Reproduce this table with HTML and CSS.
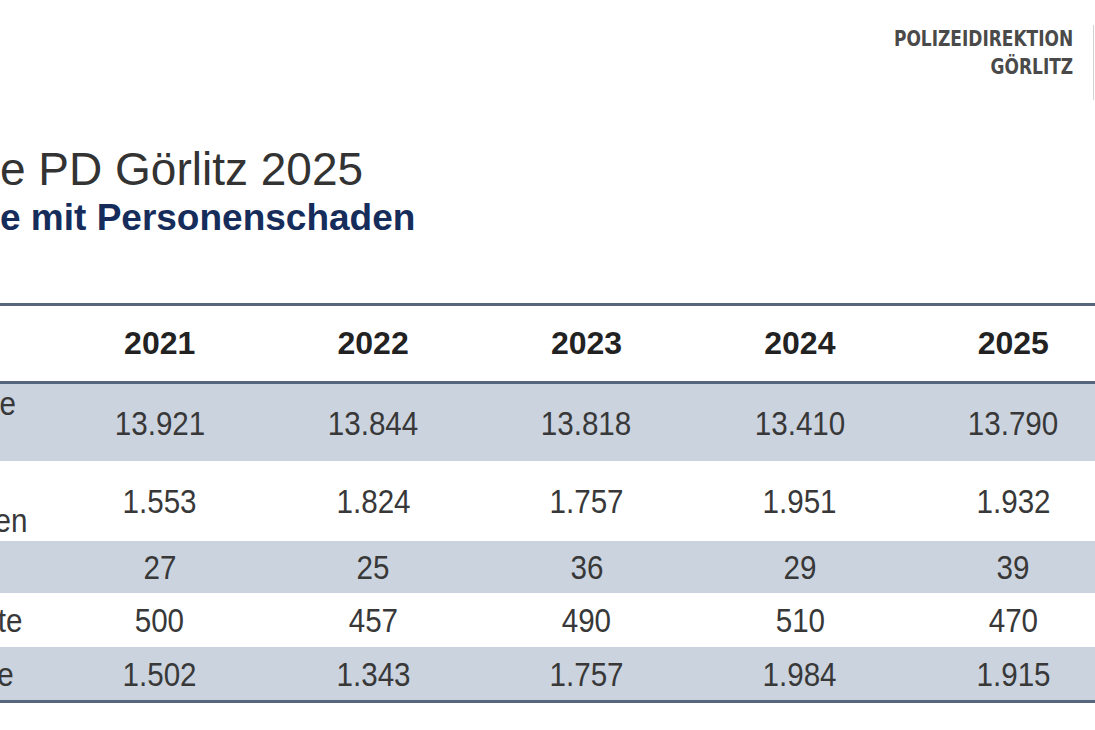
FILE: index.html
```html
<!DOCTYPE html>
<html lang="de">
<head>
<meta charset="utf-8">
<title>Verkehrsunfalllage PD Görlitz 2025</title>
<link rel="stylesheet" href="styles.css">
</head>
<body>
<div class="slide">
  <header class="brand">
    <div class="brand-text">
      <div>POLIZEIDIREKTION</div>
      <div>GÖRLITZ</div>
    </div>
    <div class="brand-rule"></div>
  </header>

  <section class="heading">
    <h1 class="title"><span class="pre">Verkehrsunfalllag</span><span>e PD Görlitz 2025</span></h1>
    <h2 class="subtitle"><span class="pre">Verkehrsunfäll</span><span>e mit Personenschaden</span></h2>
  </section>

  <table class="stats">
    <colgroup>
      <col class="c-label">
      <col class="c-year"><col class="c-year"><col class="c-year"><col class="c-year"><col class="c-year">
    </colgroup>
    <thead>
      <tr>
        <th class="label"></th>
        <th>2021</th><th>2022</th><th>2023</th><th>2024</th><th>2025</th>
      </tr>
    </thead>
    <tbody>
      <tr class="shade r1">
        <td class="label top"><span class="n">Verkehrsunfälle</span><br><span class="n">gesamt</span></td>
        <td><span class="n">13.921</span></td><td><span class="n">13.844</span></td><td><span class="n">13.818</span></td><td><span class="n">13.410</span></td><td><span class="n">13.790</span></td>
      </tr>
      <tr class="r2">
        <td class="label"><span class="n">Unfälle mit</span><br><span class="n">Personenschaden</span></td>
        <td><span class="n">1.553</span></td><td><span class="n">1.824</span></td><td><span class="n">1.757</span></td><td><span class="n">1.951</span></td><td><span class="n">1.932</span></td>
      </tr>
      <tr class="shade r3">
        <td class="label"><span class="n">Getötete</span></td>
        <td><span class="n">27</span></td><td><span class="n">25</span></td><td><span class="n">36</span></td><td><span class="n">29</span></td><td><span class="n">39</span></td>
      </tr>
      <tr class="r4">
        <td class="label"><span class="n">Schwerverletzte</span></td>
        <td><span class="n">500</span></td><td><span class="n">457</span></td><td><span class="n">490</span></td><td><span class="n">510</span></td><td><span class="n">470</span></td>
      </tr>
      <tr class="shade r5">
        <td class="label"><span class="n">Leichtverletzte</span></td>
        <td><span class="n">1.502</span></td><td><span class="n">1.343</span></td><td><span class="n">1.757</span></td><td><span class="n">1.984</span></td><td><span class="n">1.915</span></td>
      </tr>
    </tbody>
  </table>
</div>
</body>
</html>
```
FILE: styles.css
```css
html, body {
  margin: 0;
  padding: 0;
  background: #ffffff;
}
body {
  width: 1095px;
  height: 730px;
  overflow: hidden;
  font-family: "Liberation Sans", Arial, sans-serif;
}
.slide {
  width: 1095px;
  height: 730px;
  overflow: hidden;
}

/* brand block */
.brand {
  display: flex;
  justify-content: flex-end;
  align-items: flex-start;
  gap: 20px;
  padding: 25px 1px 0 0;
  height: 75px;
}
.brand-text {
  font-family: "DejaVu Sans Condensed", "DejaVu Sans", sans-serif;
  font-weight: bold;
  font-size: 21px;
  line-height: 28px;
  color: #4a4a4a;
  text-align: right;
  transform: scaleX(0.9);
  transform-origin: right top;
}
.brand-rule {
  width: 1px;
  height: 75px;
  background: #d2d2d2;
}

/* headings */
.heading {
  margin-top: 45px;
}
.title, .subtitle {
  display: flex;
  margin: 0;
  white-space: nowrap;
}
.pre {
  width: 0;
  flex: none;
  display: flex;
  justify-content: flex-end;
  white-space: nowrap;
}
.title {
  font-size: 46px;
  line-height: 48px;
  font-weight: normal;
  color: #333333;
}
.subtitle {
  font-size: 37px;
  line-height: 40px;
  font-weight: bold;
  color: #162d5c;
  margin-top: 5px;
}

/* table */
.stats {
  margin-top: 65px;
  margin-left: -347px;
  border-collapse: collapse;
  table-layout: fixed;
  width: 1467px;
  border-top: 3px solid #56667f;
  border-bottom: 3px solid #56667f;
}
.c-label { width: 400px; }
.c-year { width: 213.4px; }

.stats th {
  height: 75px;
  padding: 0;
  font-family: "Liberation Sans", Arial, sans-serif;
  font-weight: bold;
  font-size: 32px;
  color: #222222;
  text-align: center;
  vertical-align: middle;
  border-bottom: 3px solid #56667f;
}
.stats td {
  padding: 0;
  font-family: "Liberation Sans", Arial, sans-serif;
  font-size: 34px;
  line-height: 38px;
  color: #383838;
  text-align: center;
  vertical-align: middle;
  white-space: nowrap;
}
.n {
  display: inline-block;
  transform: scaleX(0.87);
}
.stats td.label {
  text-align: left;
  padding-left: 159px;
}
.stats td.label .n {
  transform-origin: left center;
}
.stats td.top { vertical-align: top; }
.r2 td.label { padding-left: 136px; }
.r5 td.label { padding-left: 170px; }
.shade td { background: #cbd3df; }

.r1 td { height: 77px; }
.r2 td { height: 80px; }
.r3 td { height: 52px; }
.r4 td { height: 54px; }
.r5 td { height: 53px; }
```
